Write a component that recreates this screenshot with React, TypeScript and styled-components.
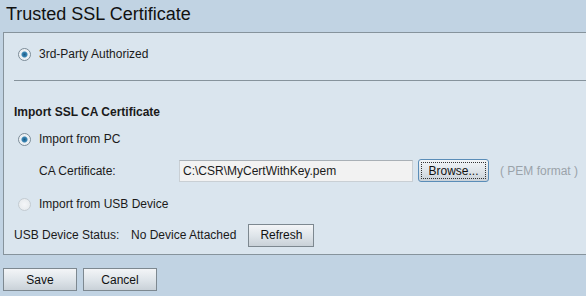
import React from 'react';
import styled, { createGlobalStyle } from 'styled-components';

const GlobalStyle = createGlobalStyle`
	html, body {
		margin: 0;
		padding: 0;
		background: #c1d3e3;
		font-family: Arial, "Liberation Sans", sans-serif;
		font-size: 12px;
		color: #1a1a1a;
	}
`;

const Page = styled.div`
	width: 586px;
	height: 296px;
	overflow: hidden;
	background: #c1d3e3;
`;

const Title = styled.h1`
	margin: 0;
	height: 32px;
	padding: 2px 0 0 6px;
	box-sizing: border-box;
	font-size: 18px;
	font-weight: normal;
	line-height: 24px;
	color: #111;
`;

const Panel = styled.div`
	margin-left: 3px;
	border-top: 1px solid #86939c;
	border-left: 1px solid #86939c;
	border-bottom: 1px solid #86939c;
	background: #dae5ee;
	padding: 12px 0 8px 10px;
	height: 223px;
	box-sizing: border-box;
`;

const Row = styled.div<{ $indent?: number; $height?: number }>`
	display: flex;
	align-items: center;
	height: ${(p) => p.$height ?? 20}px;
	padding-left: ${(p) => p.$indent ?? 0}px;
`;

const Radio = styled.span<{ $checked?: boolean }>`
	width: 11px;
	height: 11px;
	border-radius: 50%;
	border: 1px solid ${(p) => (p.$checked ? '#7c8c98' : '#c4ccd2')};
	background: ${(p) => (p.$checked ? 'radial-gradient(circle, #1d5a84 0, #3a87b6 2.5px, #e9eef2 3.5px, #f7f9fb 100%)' : 'radial-gradient(circle, #f4f6f8 0, #e4e8eb 100%)')};
	margin: 0 8px 0 4px;
	flex-shrink: 0;
`;

const Divider = styled.hr`
	border: none;
	border-top: 1px solid #86939c;
	margin: 17px 0 0 0;
`;

const SectionTitle = styled.div`
	font-weight: bold;
	margin-top: 22px;
	height: 18px;
	line-height: 18px;
`;

const Label = styled.span<{ $width?: number }>`
	width: ${(p) => (p.$width ? `${p.$width}px` : 'auto')};
	flex-shrink: 0;
`;

const FileInput = styled.div`
	width: 234px;
	height: 22px;
	box-sizing: border-box;
	border: 1px solid #c9cfd4;
	border-top-color: #a9b0b6;
	background: #f2f2f2;
	padding: 3px 3px;
	line-height: 14px;
`;

const Button = styled.button<{ $width: number; $focused?: boolean }>`
	width: ${(p) => p.$width}px;
	height: 23px;
	font-family: Arial, "Liberation Sans", sans-serif;
	font-size: 12px;
	color: #111;
	border: 1px solid ${(p) => (p.$focused ? '#5a8db8' : '#7d8890')};
	border-radius: ${(p) => (p.$focused ? '3px' : '0')};
	background: linear-gradient(#f3f5f7, #dfe5ea 50%, #c9d1d8);
	padding: 0;
	outline: ${(p) => (p.$focused ? '1px dotted #333' : 'none')};
	outline-offset: -4px;
`;

const Hint = styled.span`
	color: #9aa3aa;
	margin-left: 11px;
`;

const Footer = styled.div`
	display: flex;
	gap: 6px;
	padding: 13px 0 0 3px;
`;

export default function App() {
	return (
		<Page>
			<GlobalStyle />
			<Title>Trusted SSL Certificate</Title>
			<Panel>
				<Row $height={18}>
					<Radio $checked />
					<span>3rd-Party Authorized</span>
				</Row>
				<Divider />
				<SectionTitle>Import SSL CA Certificate</SectionTitle>
				<Row $height={20} style={{ marginTop: 8 }}>
					<Radio $checked />
					<span>Import from PC</span>
				</Row>
				<Row $height={23} $indent={25} style={{ marginTop: 10 }}>
					<Label $width={140}>CA Certificate:</Label>
					<FileInput>C:\CSR\MyCertWithKey.pem</FileInput>
					<Button $width={71} $focused style={{ marginLeft: 5 }}>
						Browse...
					</Button>
					<Hint>( PEM format )</Hint>
				</Row>
				<Row $height={20} style={{ marginTop: 12 }}>
					<Radio />
					<span>Import from USB Device</span>
				</Row>
				<Row $height={24} style={{ marginTop: 9 }}>
					<Label $width={117}>USB Device Status:</Label>
					<span>No Device Attached</span>
					<Button $width={66} style={{ marginLeft: 12 }}>
						Refresh
					</Button>
				</Row>
			</Panel>
			<Footer>
				<Button $width={74}>Save</Button>
				<Button $width={74}>Cancel</Button>
			</Footer>
		</Page>
	);
}
